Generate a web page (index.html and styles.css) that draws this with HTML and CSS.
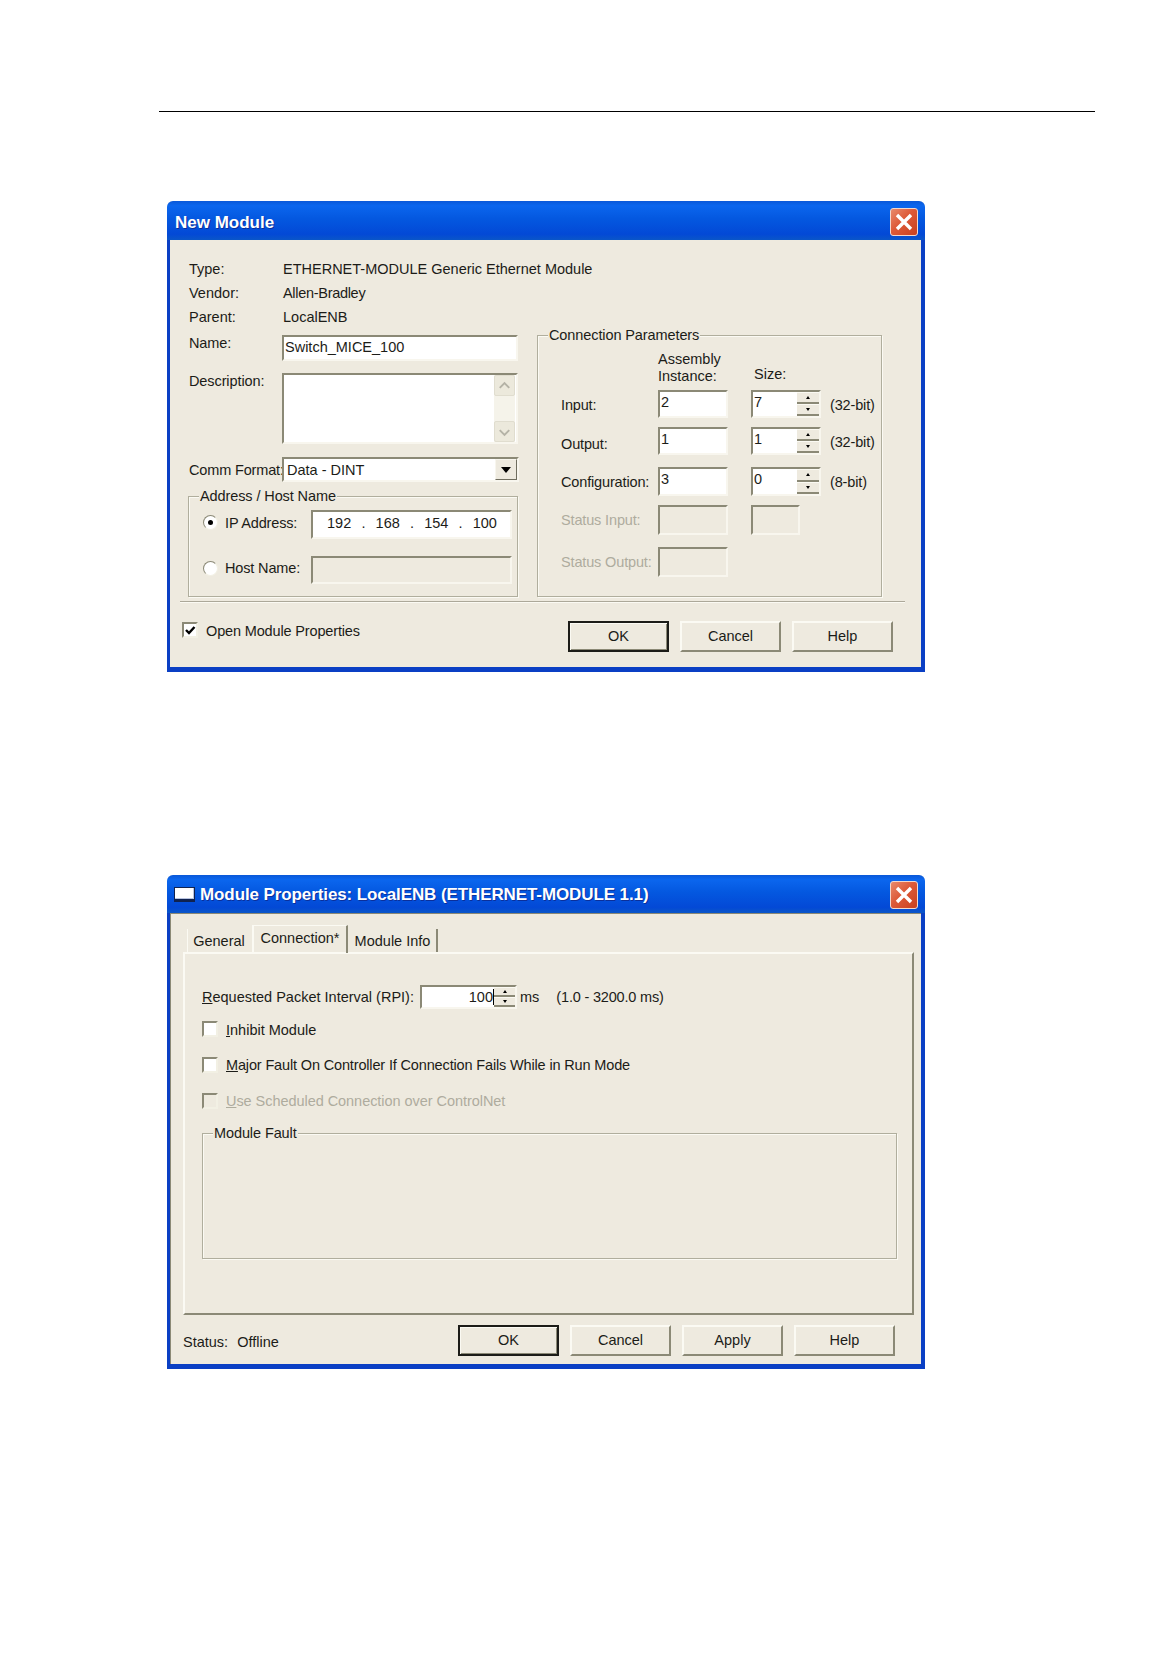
FILE: index.html
```html
<!DOCTYPE html>
<html lang="en">
<head>
<meta charset="utf-8">
<title>Module dialogs</title>
<link rel="stylesheet" href="styles.css">
</head>
<body>
<div class="rule"></div>

<section class="dialog dialog-new">
  <header class="titlebar">
    <span class="title title-new">New Module</span>
    <button class="close" aria-label="Close"><svg viewBox="0 0 28 28" width="28" height="28"><path d="M7 7 L21 21 M21 7 L7 21" stroke="#fff" stroke-width="3.4" fill="none"/></svg></button>
  </header>
  <div class="client client-new">
    <div class="info">
      <span>Type:</span><span>ETHERNET-MODULE Generic Ethernet Module</span>
      <span>Vendor:</span><span class="tight">Allen-Bradley</span>
      <span>Parent:</span><span>LocalENB</span>
    </div>
    <div class="columns">
      <div class="col-left">
        <div class="field field-name">
          <span class="lbl">Name:</span>
          <div class="sunken name-box">Switch_MICE_100</div>
        </div>
        <div class="field field-desc">
          <span class="lbl">Description:</span>
          <div class="sunken desc-box">
            <div class="scrollbar">
              <div class="sb-btn"><svg viewBox="0 0 20 20" width="20" height="20"><path d="M5 12 L10 7 L15 12" stroke="#b4b2a6" stroke-width="2" fill="none"/></svg></div>
              <div class="sb-btn"><svg viewBox="0 0 20 20" width="20" height="20"><path d="M5 8 L10 13 L15 8" stroke="#b4b2a6" stroke-width="2" fill="none"/></svg></div>
            </div>
          </div>
        </div>
        <div class="field field-comm">
          <span class="lbl">Comm Format:</span>
          <div class="sunken combo">
            <span class="combo-text">Data - DINT</span>
            <span class="combo-btn"><i class="tri-down"></i></span>
          </div>
        </div>
        <div class="group group-addr">
          <span class="legend">Address / Host Name</span>
          <div class="addr-row addr-ip">
            <i class="radio radio-on"></i><span class="addr-label">IP Address:</span>
            <div class="sunken ip-box"><span>192</span><b>.</b><span>168</span><b>.</b><span>154</span><b>.</b><span>100</span></div>
          </div>
          <div class="addr-row addr-host">
            <i class="radio"></i><span class="addr-label">Host Name:</span>
            <div class="sunken ip-box off"></div>
          </div>
        </div>
      </div>
      <div class="group group-conn">
        <span class="legend">Connection Parameters</span>
        <div class="conn-grid">
          <span></span><span class="head">Assembly<br>Instance:</span><span class="head head-size">Size:</span><span></span>

          <span class="rl h28">Input:</span>
          <div class="sunken num h28">2</div>
          <div class="sunken num size h28">7<span class="spin"><span class="spin-up"><i class="tri-up"></i></span><span class="spin-dn"><i class="tri-down small"></i></span></span></div>
          <span class="rl h28 bit">(32-bit)</span>

          <span class="rl h28 low">Output:</span>
          <div class="sunken num h28">1</div>
          <div class="sunken num size h28">1<span class="spin"><span class="spin-up"><i class="tri-up"></i></span><span class="spin-dn"><i class="tri-down small"></i></span></span></div>
          <span class="rl h28 bit">(32-bit)</span>

          <span class="rl h29 high">Configuration:</span>
          <div class="sunken num h29">3</div>
          <div class="sunken num size h29">0<span class="spin"><span class="spin-up"><i class="tri-up"></i></span><span class="spin-dn"><i class="tri-down small"></i></span></span></div>
          <span class="rl h29 high bit">(8-bit)</span>

          <span class="rl h30 dim high">Status Input:</span>
          <div class="sunken num off h30"></div>
          <div class="sunken num off size-off h30"></div>
          <span></span>

          <span class="rl h30 dim high">Status Output:</span>
          <div class="sunken num off h30"></div>
          <span></span><span></span>
        </div>
      </div>
    </div>
    <div class="sep"></div>
    <div class="foot foot-new">
      <i class="check checked"><svg viewBox="0 0 12 12" width="12" height="12"><path d="M2 6 L5 9 L10.5 3" stroke="#000" stroke-width="2.4" fill="none"/></svg></i>
      <span class="foot-label">Open Module Properties</span>
      <div class="btns">
        <button class="btn default">OK</button>
        <button class="btn">Cancel</button>
        <button class="btn">Help</button>
      </div>
    </div>
  </div>
</section>

<section class="dialog dialog-props">
  <header class="titlebar">
    <i class="appicon"></i>
    <span class="title title-props">Module Properties: LocalENB (ETHERNET-MODULE 1.1)</span>
    <button class="close" aria-label="Close"><svg viewBox="0 0 28 28" width="28" height="28"><path d="M7 7 L21 21 M21 7 L7 21" stroke="#fff" stroke-width="3.4" fill="none"/></svg></button>
  </header>
  <div class="client client-props">
    <nav class="tabs">
      <span class="tab tab-general">General</span>
      <span class="tab tab-active">Connection*</span>
      <span class="tab tab-info">Module Info</span>
    </nav>
    <div class="panel">
      <div class="rpi-row">
        <span class="rpi-label"><u>R</u>equested Packet Interval (RPI):</span>
        <div class="sunken rpi-box"><span class="rpi-val">100</span><span class="spin"><span class="spin-up"><i class="tri-up"></i></span><span class="spin-dn"><i class="tri-down small"></i></span></span></div>
        <span class="rpi-ms">ms</span>
        <span class="rpi-range">(1.0 - 3200.0 ms)</span>
      </div>
      <div class="opt opt-inhibit"><i class="check"></i><span><u>I</u>nhibit Module</span></div>
      <div class="opt opt-major"><i class="check"></i><span><u>M</u>ajor Fault On Controller If Connection Fails While in Run Mode</span></div>
      <div class="opt opt-use dim"><i class="check off"></i><span><u>U</u>se Scheduled Connection over ControlNet</span></div>
      <div class="group group-fault"><span class="legend">Module Fault</span></div>
    </div>
    <div class="foot foot-props">
      <span class="status">Status:</span><span class="status-val">Offline</span>
      <div class="btns">
        <button class="btn default">OK</button>
        <button class="btn">Cancel</button>
        <button class="btn">Apply</button>
        <button class="btn">Help</button>
      </div>
    </div>
  </div>
</section>
</body>
</html>
```
FILE: styles.css
```css
* { box-sizing: border-box; }
html, body { margin: 0; padding: 0; background: #fff; }
body {
  width: 1174px;
  height: 1668px;
  overflow: hidden;
  padding-top: 111px;
  font-family: "Liberation Sans", Arial, sans-serif;
  font-size: 14.5px;
  color: #1c1c18;
}
i { display: block; font-style: normal; }

.rule { width: 936px; height: 1px; margin-left: 159px; background: #000; }

/* window frame */
.dialog {
  width: 758px;
  margin-left: 167px;
  background: #eeeadf;
  display: flex;
  flex-direction: column;
  border-radius: 6px 6px 0 0;
  overflow: hidden;
}
.dialog-new { height: 471px; margin-top: 89px; }
.dialog-props { height: 494px; margin-top: 203px; }

.titlebar {
  height: 39px;
  flex: none;
  display: flex;
  align-items: center;
  padding: 0 7px 0 8px;
  background: linear-gradient(#0a58d8 0, #0b66ee 12%, #0458e0 45%, #0349d6 85%, #0a56c8 100%);
}
.dialog-props .titlebar { height: 38px; padding-left: 7px; }
.title {
  color: #fff;
  font-family: "Liberation Sans", Arial, sans-serif;
  font-size: 17px;
  font-weight: 700;
  text-shadow: 1px 1px 0 #0b2f9a;
  white-space: nowrap;
}
.title-new { margin-top: 5px; }
.title-props { letter-spacing: -.1px; margin-left: 5px; margin-top: 2px; }
.appicon {
  width: 21px; height: 15px;
  background: #fff;
  border: 1px solid #10224f;
  border-bottom: 3px solid #10224f;
  box-shadow: inset -1px -1px 0 #b9c4e0;
}
.close {
  width: 28px; height: 28px;
  margin-left: auto;
  padding: 0;
  border: 1px solid #f3d8cc;
  border-radius: 3px;
  background: linear-gradient(135deg, #e88a6c 0, #dd5a38 45%, #c9401f 100%);
  display: block;
}
.dialog-new .close { margin-top: 3px; }
.dialog-props .close { margin-top: 1px; }
.close svg { display: block; margin: -1px; }

.client {
  flex: 1;
  border: solid #0a3fc4;
  border-width: 0 4px 5px 3px;
  min-height: 0;
}

/* New Module dialog */
.client-new { padding: 17px 0 0 18px; }
.info {
  display: grid;
  grid-template-columns: 94px 1fr;
  grid-auto-rows: 24px;
  align-items: center;
  padding-left: 1px;
  height: 78px;
}
.tight { letter-spacing: -.3px; }
.columns { display: flex; align-items: flex-start; }
.col-left { width: 331px; flex: none; }
.field { display: flex; align-items: flex-start; }
.lbl { width: 94px; flex: none; padding-left: 1px; line-height: 18px; white-space: nowrap; letter-spacing: -.1px; }
.field-name .lbl { margin-top: -1px; }
.field-desc { margin-top: 12px; }
.field-desc .lbl { margin-top: -1px; }
.field-comm { margin-top: 13px; }
.field-comm .lbl { margin-top: 4px; letter-spacing: -.15px; }

.sunken {
  background: #fff;
  border-style: solid;
  border-width: 2px;
  border-color: #8b8976 #f8f6ee #f8f6ee #8b8976;
  position: relative;
}
.sunken.off { background: #eeeadf; }

.name-box { width: 236px; height: 26px; line-height: 20px; padding-left: 1px; }
.desc-box { width: 236px; height: 71px; display: flex; justify-content: flex-end; }
.scrollbar {
  width: 21px;
  margin-right: 1px;
  background: #f5f3ea;
  display: flex;
  flex-direction: column;
  justify-content: space-between;
  height: 67px;
}
.sb-btn {
  height: 21px;
  background: #ece9dc;
  border: 1px solid #e0ddcf;
  border-radius: 2px;
  display: flex; align-items: center; justify-content: center;
}
.combo { width: 238px; height: 25px; display: flex; align-items: center; justify-content: space-between; }
.combo-text { padding-left: 3px; }
.combo-btn {
  width: 22px; height: 21px;
  background: #eeeadf;
  border: 1px solid;
  border-color: #f8f6ee #6f6d5e #6f6d5e #f8f6ee;
  display: flex; align-items: center; justify-content: center;
}
.tri-down { width: 0; height: 0; border: 5px solid transparent; border-top: 6px solid #000; border-bottom: 0; }
.tri-down.small { border-width: 3px 2.5px 0; border-top-color: #000; }
.tri-up { width: 0; height: 0; border: 2.5px solid transparent; border-bottom: 3px solid #000; border-top: 0; }

/* group boxes */
.group {
  position: relative;
  border: 1px solid #b0ae9d;
  box-shadow: 1px 1px 0 #fbfaf3, inset 1px 1px 0 #fbfaf3;
}
.legend {
  position: absolute;
  top: -10px;
  left: 10px;
  padding: 0 1px;
  line-height: 18px;
  background: #eeeadf;
  white-space: nowrap;
  letter-spacing: -.1px;
}
.group-addr { width: 330px; height: 101px; margin-top: 14px; padding: 13px 0 0 14px; }
.group-addr .legend { top: -10px; }
.addr-row { display: flex; align-items: center; height: 29px; }
.addr-host { margin-top: 17px; height: 28px; }
.addr-row .radio, .addr-label { margin-bottom: 4px; }
.addr-label { width: 86px; margin-left: 7px; flex: none; letter-spacing: -.15px; }
.ip-box { width: 201px; height: 100%; display: flex; align-items: center; padding: 0 13px 4px 14px; justify-content: space-between; }
.ip-box b { font-weight: 400; }

.radio {
  width: 15px; height: 15px;
  flex: none;
  border-radius: 50%;
  background: #fff;
  border: 1px solid;
  border-color: #8b8976 #f2f0e4 #f2f0e4 #8b8976;
  position: relative;
}
.radio-on::after {
  content: "";
  position: absolute;
  left: 4px; top: 4px;
  width: 5px; height: 5px;
  border-radius: 50%;
  background: #000;
}
.check {
  width: 16px; height: 16px;
  flex: none;
  background: #fff;
  border: 2px solid;
  border-color: #8b8976 #f2f0e4 #f2f0e4 #8b8976;
}
.check svg { display: block; }
.check.off { background: #eeeadf; }

.group-conn { width: 345px; height: 262px; margin-left: 18px; padding: 15px 0 0 23px; }
.conn-grid {
  display: grid;
  grid-template-columns: 97px 93px 79px auto;
  grid-template-rows: 39px 37px 40px 38px 42px 30px;
  align-items: start;
}
.head { line-height: 17px; white-space: nowrap; }
.head-size { padding-top: 15px; padding-left: 3px; }
.rl { display: flex; align-items: center; padding-top: 2px; white-space: nowrap; letter-spacing: -.15px; }
.rl.low { padding-top: 5px; }
.rl.high { padding-top: 0; }
.h28 { height: 28px; }
.h29 { height: 29px; }
.h30 { height: 30px; }
.dim { color: #aeac9e; }
.num { width: 70px; line-height: 20px; padding-left: 1px; display: flex; justify-content: space-between; }
.size-off { width: 49px; }
.spin {
  width: 22px;
  margin-left: auto;
  align-self: stretch;
  display: flex;
  flex-direction: column;
}
.spin-up, .spin-dn {
  flex: 1;
  display: flex; align-items: center; justify-content: center;
  background: #eeeadf;
  border-top: 1px solid #fbfaf3;
  border-bottom: 2px solid #8b8976;
}
.sep { height: 2px; width: 725px; margin: 4px 0 0 -8px; background: #aca899; border-bottom: 1px solid #fbfaf3; }

.foot { display: flex; align-items: flex-start; position: relative; }
.foot-new { margin-left: -6px; padding-top: 18px; width: 711px; }
.foot-new .check { margin-top: 1px; }
.foot-label { margin-left: 8px; margin-top: 2px; line-height: 16px; letter-spacing: -.15px; }
.btns { display: flex; gap: 11px; margin-left: auto; }
.btn {
  width: 101px; height: 31px;
  padding: 0 0 2px;
  font: inherit;
  color: inherit;
  background: #eeeadf;
  border: 2px solid;
  border-color: #fbfaf3 #8b8976 #8b8976 #fbfaf3;
}
.btn.default {
  border: 2px solid #1c1c18;
  box-shadow: inset 1px 1px 0 #fbfaf3, inset -1px -1px 0 #8b8976;
}

/* Module Properties dialog */
.client-props {
  padding: 0 0 0 13px;
  box-shadow: inset 1px 1px 0 #8b8976;
  display: flex;
  flex-direction: column;
}
.tabs { height: 39px; flex: none; display: flex; align-items: flex-end; padding-left: 4px; }
.tab { display: flex; align-items: center; justify-content: center; white-space: nowrap; }
.tab-general { width: 63px; height: 23px; border-left: 1px solid #fbfaf3; }
.tab-active {
  width: 96px; height: 28px;
  margin-left: 2px;
  border-top: 1px solid #fbfaf3;
  border-left: 2px solid #fbfaf3;
  border-right: 2px solid #8b8976;
  padding-bottom: 4px;
  position: relative;
  top: 1px;
}
.tab-info { width: 90px; height: 23px; border-right: 2px solid #8b8976; padding-left: 1px; }
.panel {
  width: 731px;
  height: 363px;
  flex: none;
  border: 2px solid;
  border-color: #fbfaf3 #8b8976 #8b8976 #fbfaf3;
  padding: 31px 0 0 17px;
}
.rpi-row { display: flex; align-items: center; height: 24px; }
.rpi-label { width: 218px; flex: none; white-space: nowrap; }
.rpi-box { width: 97px; height: 24px; display: flex; align-items: center; justify-content: flex-end; }
.rpi-val { border-right: 1px solid #000; line-height: 16px; }
.rpi-box .spin { margin-left: 0; width: 21px; }
.rpi-ms { margin-left: 3px; }
.rpi-range { margin-left: 17px; letter-spacing: -.18px; }
.opt { display: flex; align-items: center; gap: 8px; height: 16px; }
.opt-inhibit { margin-top: 12px; }
.opt-inhibit span { position: relative; top: 1px; }
.opt-major { margin-top: 20px; }
.opt-major span { letter-spacing: -.15px; }
.opt-use { margin-top: 20px; }
.opt-use span { letter-spacing: -.05px; }
.group-fault { width: 695px; height: 126px; margin-top: 24px; }

.foot-props { width: 712px; padding-top: 10px; align-items: center; }
.status { margin-top: 3px; }
.status-val { margin-left: 9px; margin-top: 3px; }
```
